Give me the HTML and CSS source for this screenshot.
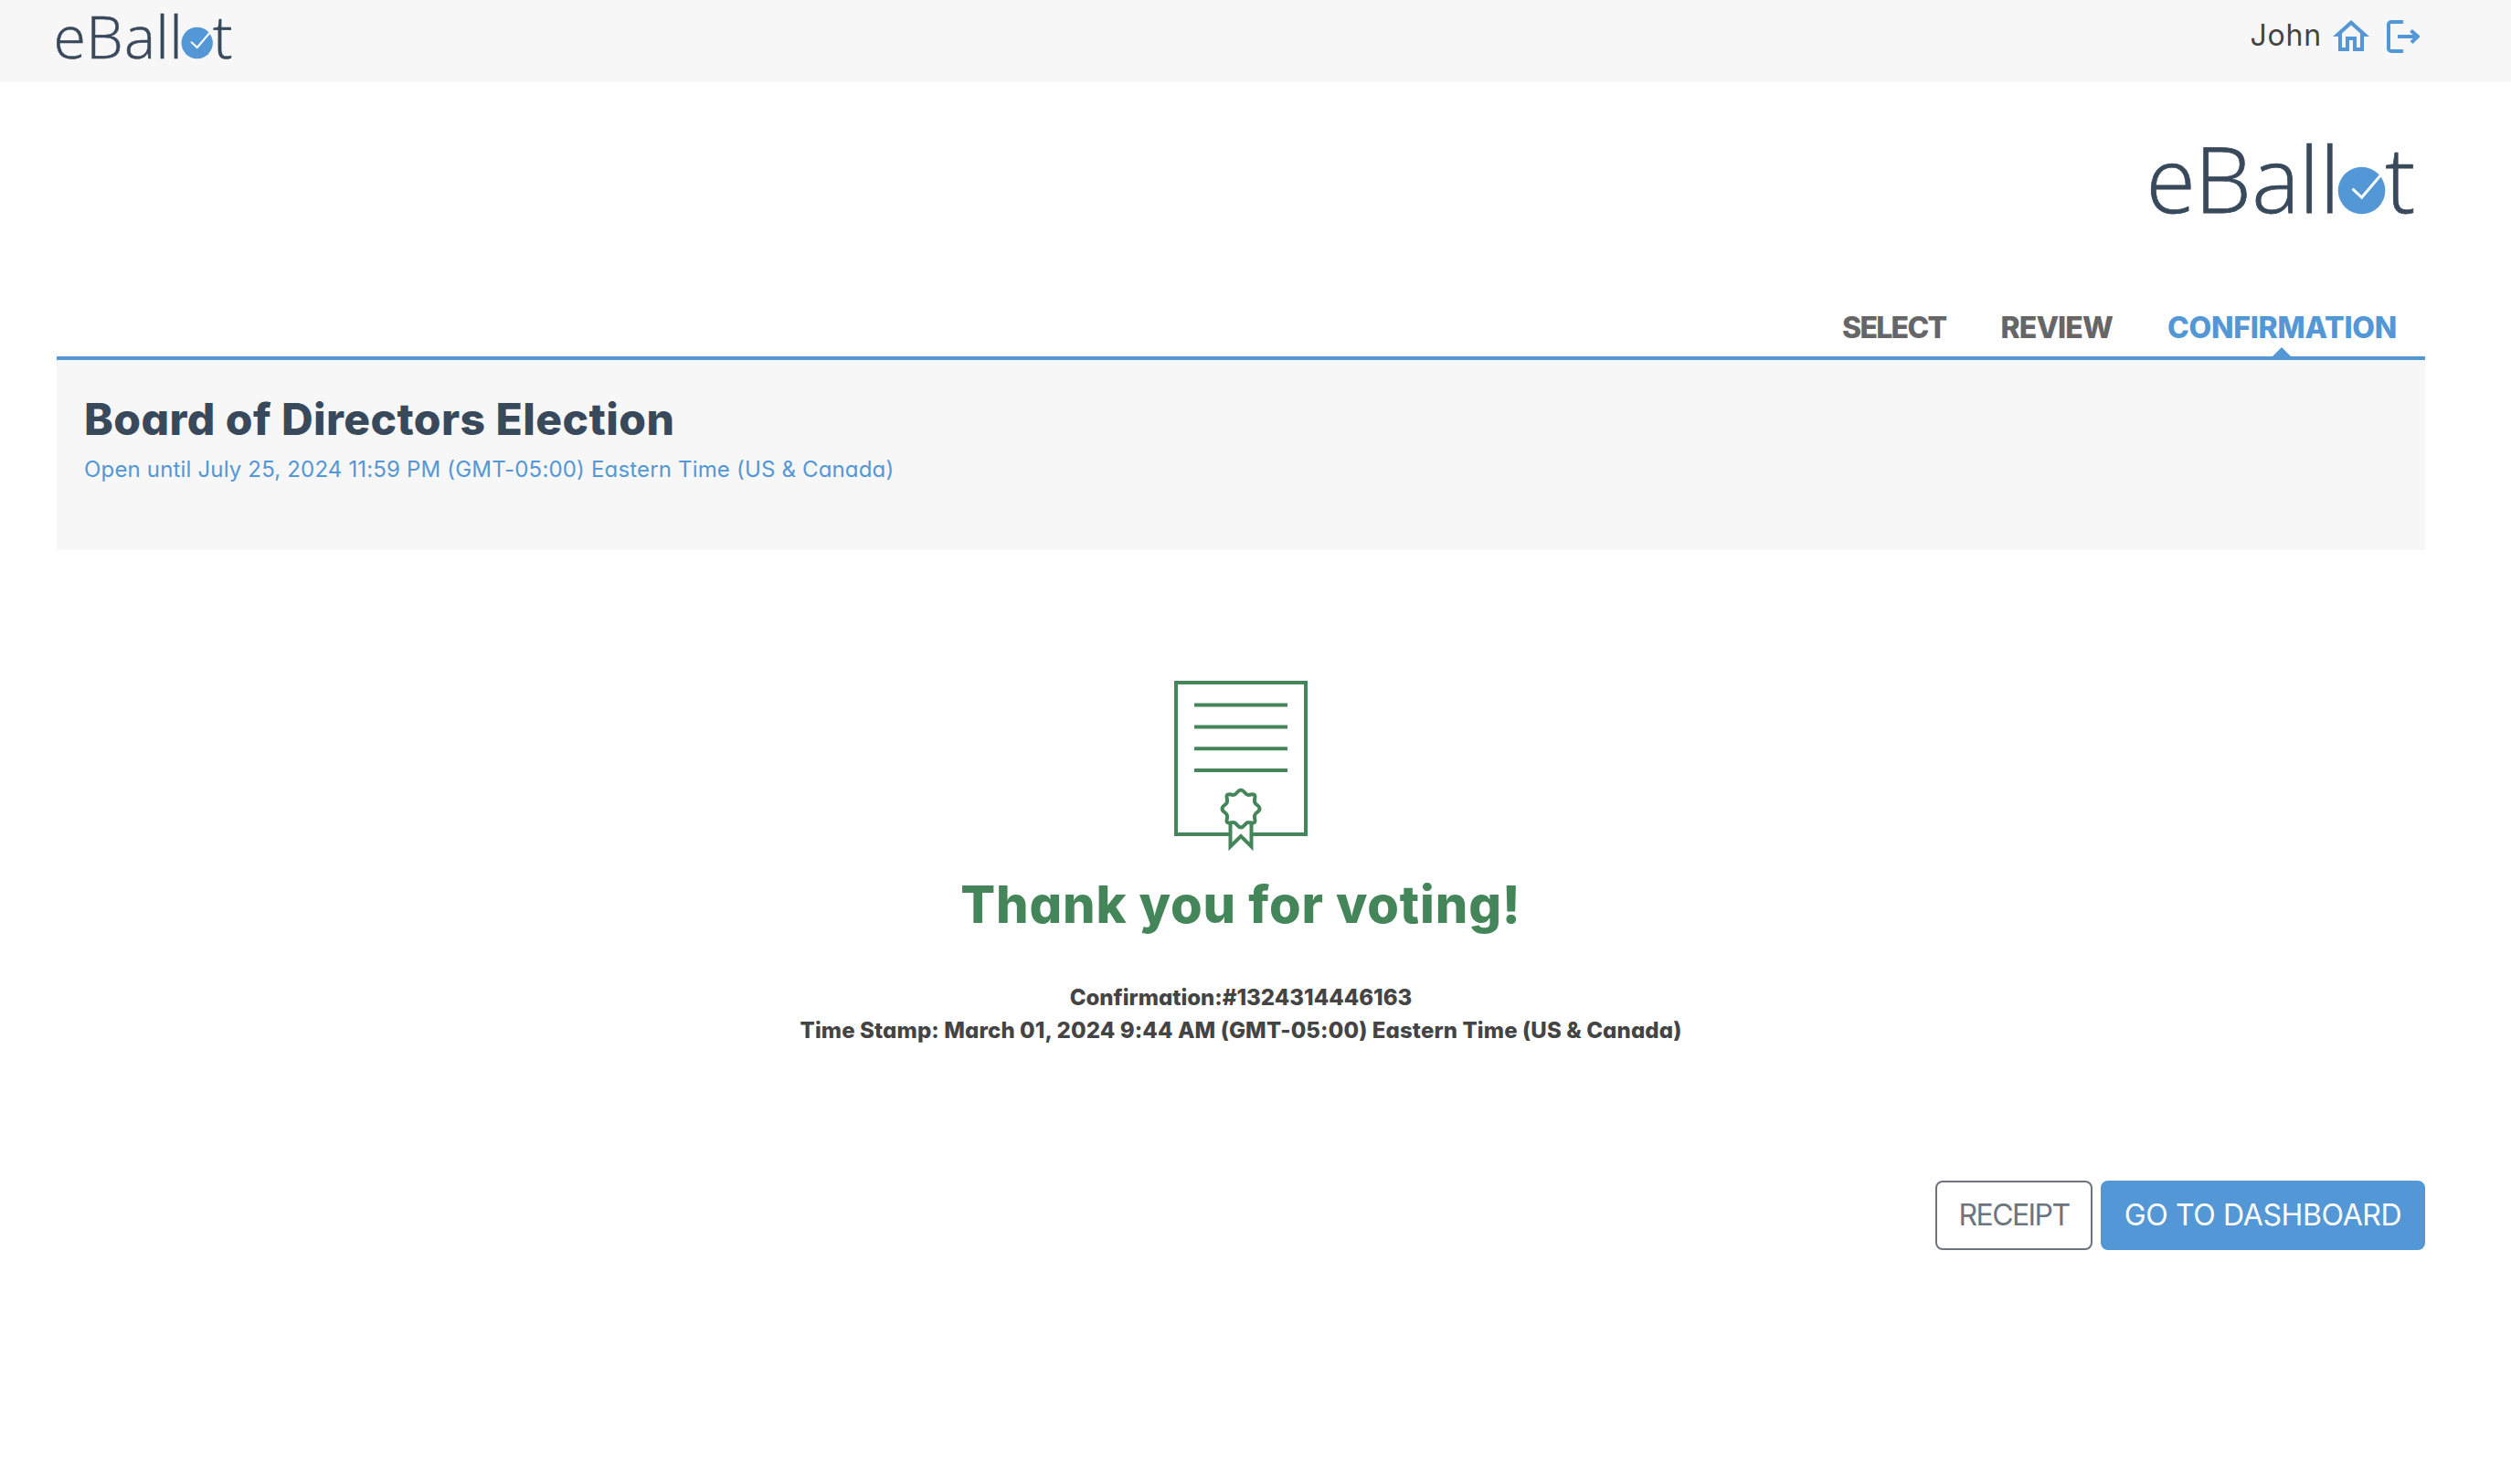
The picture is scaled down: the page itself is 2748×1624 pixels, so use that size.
FILE: index.html
```html
<!DOCTYPE html>
<html lang="en">
<head>
<meta charset="UTF-8">
<meta name="viewport" content="width=device-width, initial-scale=1.0">
<title>eBallot - Confirmation</title>
<link rel="stylesheet" href="styles.css">
</head>
<body>
<header class="topbar">
  <a class="topbar-logo" href="#" aria-label="eBallot">
    <svg class="logo logo-small" viewBox="0 0 194 52">
      <text class="logo-text" x="-3.4 32.2 74 108.3 123.3 171" y="49.5">eBallt</text>
      <circle class="logo-dot" cx="153.7" cy="33" r="17.2"/>
      <path class="logo-check" d="M147 31.8l6.8 6.2 13.6-16"/>
    </svg>
  </a>
  <div class="user-menu">
    <span class="user-name">John</span>
    <a class="user-link" href="#" aria-label="Home">
      <svg class="icon-home" viewBox="0 0 24 24"><path d="M12 5.69l5 4.5V18h-2v-6H9v6H7v-7.81l5-4.5M12 3L2 12h3v8h6v-6h2v6h6v-8h3L12 3z"/></svg>
    </a>
    <a class="user-link" href="#" aria-label="Log out">
      <svg class="icon-logout" viewBox="0 0 36 36"><path d="M18 2H5a3 3 0 0 0-3 3v26a3 3 0 0 0 3 3h13M12 18h22M26.5 11.5L34 18l-7 6.5"/></svg>
    </a>
  </div>
</header>

<main class="container">
  <div class="brand">
    <svg class="logo logo-large" viewBox="0 0 194 52">
      <text class="logo-text" x="-3.6 31.8 73.5 108 123 170.8" y="49.5">eBallt</text>
      <circle class="logo-dot" cx="153.7" cy="33" r="17.2"/>
      <path class="logo-check" d="M147 31.8l6.8 6.2 13.6-16"/>
    </svg>
  </div>

  <nav class="steps">
    <span class="step step-select">SELECT</span>
    <span class="step step-review">REVIEW</span>
    <span class="step step-confirmation active">CONFIRMATION</span>
  </nav>

  <section class="ballot-header">
    <h1 class="ballot-title">Board of Directors Election</h1>
    <p class="ballot-date">Open until July 25, 2024 11:59 PM (GMT-05:00) Eastern Time (US &amp; Canada)</p>
  </section>

  <section class="confirmation">
    <svg class="certificate" viewBox="0 0 146 188">
      <path d="M60 168H2V2h142v166H84"/>
      <path d="M22 26.5h102M22 50.5h102M22 74.2h102M22 98h102"/>
      <path d="M61.5 155v26.5L73 170l11.5 11.5V155"/>
      <path class="seal" d="M73 119.5C77 119.5 77.5 125.5 81.5 125C85 124.5 87 123.5 88 125C89.5 127 87.5 129 88 132C88 136 93.5 136 93.5 140C93.5 144 88 144 88 148C87.5 151 89.5 153 88 155C87 156.5 85 155 81.5 155C77.5 154.5 77 160.5 73 160.5C69 160.5 68.5 154.5 64.5 155C61 155 59 156.5 58 155C56.5 153 58.5 151 58 148C58 144 52.5 144 52.5 140C52.5 136 58 136 58 132C58.5 129 56.5 127 58 125C59 123.5 61 124.5 64.5 125C68.5 125.5 69 119.5 73 119.5Z"/>
    </svg>
    <h2 class="thanks">Thank you for voting!</h2>
    <p class="detail detail-number">Confirmation:#1324314446163</p>
    <p class="detail detail-time">Time Stamp: March 01, 2024 9:44 AM (GMT-05:00) Eastern Time (US &amp; Canada)</p>
  </section>

  <div class="actions">
    <button class="btn btn-outline" type="button">RECEIPT</button>
    <button class="btn btn-primary" type="button">GO TO DASHBOARD</button>
  </div>
</main>
</body>
</html>
```
FILE: styles.css
```css
:root {
  --blue: #5397d6;
  --navy: #39495c;
  --green: #44865a;
  --light: #f7f7f7;
}

* {
  box-sizing: border-box;
}

body {
  margin: 0;
  background-color: #fff;
  color: #444;
  font-family: Inter, "Open Sans", sans-serif;
  font-feature-settings: "cv11";
  font-size: 24px;
}

h1, h2, p {
  margin: 0;
}

svg {
  display: block;
}

.topbar {
  display: flex;
  justify-content: space-between;
  height: 90px;
  padding: 14px 94px 0 62px;
  background-color: var(--light);
}

/* logo */
.logo {
  overflow: visible;
}

.logo-small {
  width: 194px;
  height: 52px;
}

.logo-large {
  width: 291px;
  height: 78px;
}

.logo-text {
  font-family: "Open Sans", sans-serif;
  font-size: 66px;
  font-weight: 300;
  fill: var(--navy);
  stroke: var(--navy);
  stroke-width: 0.5;
}

.logo-small .logo-text {
  font-size: 64.5px;
}

.logo-dot {
  fill: var(--blue);
}

.logo-check {
  fill: none;
  stroke: #fff;
  stroke-width: 2;
}

.user-menu {
  display: flex;
  align-items: flex-start;
}

.user-name {
  margin-right: 8px;
  font-size: 32px;
  line-height: 50px;
  letter-spacing: 0.8px;
}

.icon-home {
  width: 48px;
  height: 48px;
  margin: 2px 15px 0 0;
  fill: var(--blue);
}

.icon-logout {
  width: 36px;
  height: 36px;
  margin: 8px 6px 0 0;
  fill: none;
  stroke: var(--blue);
  stroke-width: 4;
}

.container {
  padding: 69px 94px 0 62px;
}

.brand {
  display: flex;
  justify-content: flex-end;
  height: 163px;
  padding-right: 9px;
}

/* steps */
.steps {
  display: flex;
  justify-content: flex-end;
  gap: 60px;
  height: 68px;
  padding-right: 31px;
  font-size: 32px;
  font-weight: 800;
  line-height: 74px;
  color: #666;
}

.step {
  position: relative;
  height: 68px;
  white-space: nowrap;
}

.step-select {
  letter-spacing: -1.7px;
}

.step-review {
  letter-spacing: -0.9px;
}

.step-confirmation {
  letter-spacing: -0.25px;
}

.active {
  color: var(--blue);
}

.active::after {
  content: "";
  position: absolute;
  bottom: 0;
  left: 50%;
  margin-left: -10px;
  border: 10px solid transparent;
  border-top: 0;
  border-bottom-color: var(--blue);
}

.ballot-header {
  height: 212px;
  padding: 29px 30px 0;
  border-top: 4px solid var(--blue);
  background-color: var(--light);
}

.ballot-title {
  font-size: 48px;
  font-weight: 800;
  line-height: 72px;
  letter-spacing: 0.43px;
  color: var(--navy);
}

.ballot-date {
  line-height: 38px;
  letter-spacing: 0.17px;
  color: var(--blue);
}

/* confirmation */
.confirmation {
  display: flex;
  flex-direction: column;
  align-items: center;
  padding-top: 142.5px;
}

.certificate {
  width: 146px;
  height: 188px;
  fill: none;
  stroke: var(--green);
  stroke-width: 4;
}

.seal {
  fill: #fff;
}

.thanks {
  margin: 15.5px 0 42px;
  font-size: 56px;
  font-weight: 800;
  line-height: 84px;
  letter-spacing: 0.85px;
  color: var(--green);
}

.detail {
  font-weight: 800;
  line-height: 36px;
}

.detail-time {
  letter-spacing: 0.12px;
}

.actions {
  display: flex;
  justify-content: flex-end;
  gap: 9px;
  padding-top: 146px;
}

.btn {
  height: 76px;
  padding: 0 0 2px;
  border: 2px solid var(--blue);
  border-radius: 8px;
  font: inherit;
  font-size: 32px;
}

.btn-outline {
  width: 172px;
  border-color: #6c757d;
  background-color: #fff;
  color: #6c757d;
  letter-spacing: -1.6px;
}

.btn-primary {
  width: 355px;
  background-color: var(--blue);
  color: #fff;
  letter-spacing: -0.35px;
}
```
